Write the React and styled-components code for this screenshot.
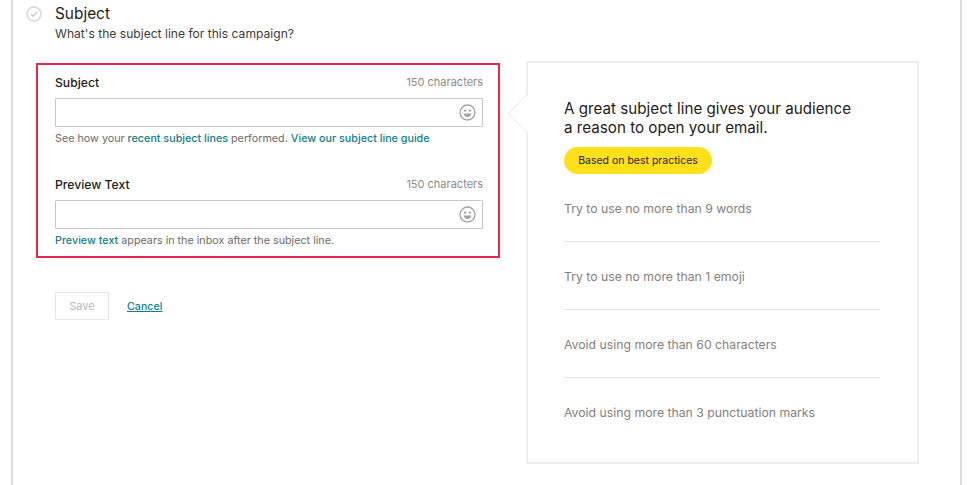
import styled, { createGlobalStyle } from "styled-components";

const GlobalStyle = createGlobalStyle`
  html, body {
    margin: 0;
    height: 100%;
    background: #fff;
    overflow: hidden;
  }
  body {
    font-family: "Inter", "Liberation Sans", sans-serif;
    color: #241c15;
  }
`;

const tips = [
  "Try to use no more than 9 words",
  "Try to use no more than 1 emoji",
  "Avoid using more than 60 characters",
  "Avoid using more than 3 punctuation marks",
];

const SmileIcon = () => (
  <svg width="17" height="17" viewBox="0 0 17 17" fill="none">
    <circle cx="8.5" cy="8.5" r="7.5" stroke="#a3a3a3" strokeWidth="1.3" />
    <circle cx="6" cy="6.6" r="1.2" fill="#a3a3a3" />
    <circle cx="11" cy="6.6" r="1.2" fill="#a3a3a3" />
    <path d="M4.6 9.6h7.8c-.4 2.2-2 3.6-3.9 3.6s-3.5-1.4-3.9-3.6z" fill="#a3a3a3" />
  </svg>
);

const CheckIcon = () => (
  <svg width="16" height="16" viewBox="0 0 16 16" fill="none">
    <circle cx="8" cy="8" r="7" stroke="#d4d4d4" strokeWidth="1.4" />
    <path d="M5 8.2l2.1 2.1L11 6" stroke="#c4c4c4" strokeWidth="1.2" />
  </svg>
);

const Field = ({ label, children }) => (
  <FieldWrap>
    <LabelRow>
      <Label>{label}</Label>
      <Count>150 characters</Count>
    </LabelRow>
    <InputBox>
      <SmileIcon />
    </InputBox>
    <Help>{children}</Help>
  </FieldWrap>
);

export default function App() {
  return (
    <>
      <GlobalStyle />
      <Frame>
        <Header>
          <CheckSlot>
            <CheckIcon />
          </CheckSlot>
          <div>
            <Title>Subject</Title>
            <Subtitle>What's the subject line for this campaign?</Subtitle>
          </div>
        </Header>
        <Columns>
          <Left>
            <Highlight>
              <Field label="Subject">
                See how your <HelpLink>recent subject lines</HelpLink> performed.{" "}
                <HelpLink>View our subject line guide</HelpLink>
              </Field>
              <Field label="Preview Text">
                <HelpLink>Preview text</HelpLink> appears in the inbox after the subject line.
              </Field>
            </Highlight>
            <Actions>
              <SaveButton>Save</SaveButton>
              <CancelLink>Cancel</CancelLink>
            </Actions>
          </Left>
          <Card>
            <Arrow />
            <CardTitle>
              A great subject line gives your audience
              <br />
              a reason to open your email.
            </CardTitle>
            <Pill>Based on best practices</Pill>
            <TipList>
              {tips.map((tip) => (
                <Tip key={tip}>{tip}</Tip>
              ))}
            </TipList>
          </Card>
        </Columns>
      </Frame>
    </>
  );
}

const Frame = styled.div`
  box-sizing: border-box;
  margin-left: 11px;
  width: 951px;
  height: 485px;
  border-left: 2px solid #dcdcdc;
  border-right: 2px solid #dcdcdc;
  overflow: hidden;
`;

const Header = styled.div`
  display: flex;
  padding: 5px 0 0 13px;
  height: 60px;
  box-sizing: border-box;
`;

const CheckSlot = styled.div`
  width: 29px;
  padding-top: 1px;
`;

const Title = styled.div`
  font-size: 15.4px;
  line-height: 18px;
`;

const Subtitle = styled.div`
  margin-top: 3px;
  font-size: 12.1px;
  line-height: 16px;
  color: #403b37;
`;

const Columns = styled.div`
  display: flex;
  align-items: flex-start;
  padding-left: 23px;
`;

const Left = styled.div`
  width: 464px;
  margin-top: 3px;
`;

const Highlight = styled.div`
  box-sizing: border-box;
  height: 195px;
  border: 2px solid #e8274f;
  padding: 8px 15px 0 17px;
`;

const FieldWrap = styled.div`
  height: 102px;
`;

const LabelRow = styled.div`
  display: flex;
  justify-content: space-between;
  align-items: center;
  height: 18px;
`;

const Label = styled.span`
  font-size: 12.2px;
  font-weight: 500;
`;

const Count = styled.span`
  font-size: 11px;
  color: #8a8a8a;
`;

const InputBox = styled.div`
  box-sizing: border-box;
  height: 29px;
  margin-top: 7px;
  border: 1px solid #c6c6c6;
  border-radius: 1px;
  display: flex;
  align-items: center;
  justify-content: flex-end;
  padding-right: 6px;
`;

const Help = styled.div`
  margin-top: 5px;
  font-size: 10.75px;
  line-height: 14px;
  color: #6e6a66;
`;

const HelpLink = styled.span`
  font-weight: 500;
  color: #0f7f8c;
`;

const Actions = styled.div`
  display: flex;
  align-items: center;
  gap: 18px;
  margin: 34px 0 0 19px;
`;

const SaveButton = styled.div`
  box-sizing: border-box;
  width: 54px;
  height: 28px;
  border: 1px solid #e4e4e4;
  border-radius: 1px;
  display: flex;
  align-items: center;
  justify-content: center;
  font-size: 11px;
  color: #b5b5b5;
`;

const CancelLink = styled.span`
  font-size: 10.7px;
  font-weight: 500;
  color: #0f7f8c;
  text-decoration: underline;
`;

const Card = styled.div`
  position: relative;
  box-sizing: border-box;
  width: 393px;
  height: 403px;
  margin: 1px 0 0 26px;
  border: 2px solid #eeeeee;
  padding: 36px 37px 0 36px;
`;

const Arrow = styled.div`
  position: absolute;
  left: -15.5px;
  top: 36.5px;
  box-sizing: border-box;
  width: 27px;
  height: 27px;
  background: #fff;
  border-left: 1px solid #e8e8e8;
  border-bottom: 1px solid #e8e8e8;
  transform: rotate(45deg);
`;

const CardTitle = styled.div`
  position: relative;
  font-size: 15.2px;
  line-height: 19px;
`;

const Pill = styled.div`
  display: inline-flex;
  align-items: center;
  justify-content: center;
  width: 148px;
  height: 27px;
  margin-top: 10px;
  border-radius: 14px;
  background: #ffe01b;
  font-size: 10.5px;
`;

const TipList = styled.div`
  margin-top: 0;
`;

const Tip = styled.div`
  box-sizing: border-box;
  height: 68px;
  padding-top: 27px;
  font-size: 12.25px;
  line-height: 16px;
  color: #85807b;
  border-bottom: 1px solid #e4e4e4;
  &:last-child {
    border-bottom: 0;
  }
`;
